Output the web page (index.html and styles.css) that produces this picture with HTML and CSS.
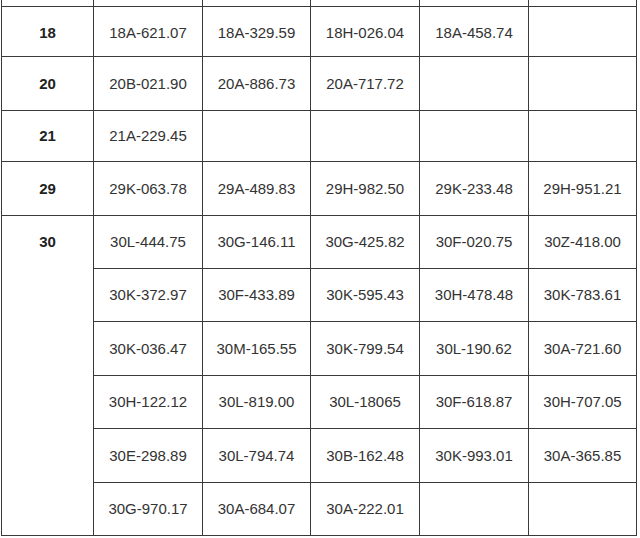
FILE: index.html
```
<!DOCTYPE html>
<html>
<head>
<meta charset="utf-8">
<link rel="stylesheet" href="styles.css">
</head>
<body>
<table class="plates">
  <tr class="h7">
    <td class="c1"></td><td class="c2"></td><td class="c3"></td><td class="c4"></td><td class="c5"></td><td class="c6"></td>
  </tr>
  <tr class="h50">
    <td class="code">18</td><td>18A-621.07</td><td>18A-329.59</td><td>18H-026.04</td><td>18A-458.74</td><td></td>
  </tr>
  <tr class="h54">
    <td class="code">20</td><td>20B-021.90</td><td>20A-886.73</td><td>20A-717.72</td><td></td><td></td>
  </tr>
  <tr class="h51">
    <td class="code">21</td><td>21A-229.45</td><td></td><td></td><td></td><td></td>
  </tr>
  <tr class="h54">
    <td class="code">29</td><td>29K-063.78</td><td>29A-489.83</td><td>29H-982.50</td><td>29K-233.48</td><td>29H-951.21</td>
  </tr>
  <tr class="h53">
    <td class="code top" rowspan="6">30</td><td>30L-444.75</td><td>30G-146.11</td><td>30G-425.82</td><td>30F-020.75</td><td>30Z-418.00</td>
  </tr>
  <tr class="h53">
    <td>30K-372.97</td><td>30F-433.89</td><td>30K-595.43</td><td>30H-478.48</td><td>30K-783.61</td>
  </tr>
  <tr class="h54">
    <td>30K-036.47</td><td>30M-165.55</td><td>30K-799.54</td><td>30L-190.62</td><td>30A-721.60</td>
  </tr>
  <tr class="h53">
    <td>30H-122.12</td><td>30L-819.00</td><td>30L-18065</td><td>30F-618.87</td><td>30H-707.05</td>
  </tr>
  <tr class="h54">
    <td>30E-298.89</td><td>30L-794.74</td><td>30B-162.48</td><td>30K-993.01</td><td>30A-365.85</td>
  </tr>
  <tr class="h53">
    <td>30G-970.17</td><td>30A-684.07</td><td>30A-222.01</td><td></td><td></td>
  </tr>
</table>
</body>
</html>
```

FILE: styles.css
```
html, body {
  margin: 0;
  padding: 0;
  background: #ffffff;
}
.plates {
  margin-left: 1px;
  border-collapse: separate;
  border-spacing: 0;
  table-layout: fixed;
  width: 636px;
  border-left: 1px solid #3a3a3a;
  font-family: "Liberation Sans", Arial, sans-serif;
  font-size: 15px;
  color: #333333;
}
.plates td {
  box-sizing: border-box;
  border-right: 1px solid #3a3a3a;
  border-bottom: 1px solid #3a3a3a;
  padding: 0;
  text-align: center;
  vertical-align: middle;
  line-height: 18px;
}
.c1 { width: 92px; }
.c2 { width: 109px; }
.c3 { width: 108px; }
.c4 { width: 109px; }
.c5 { width: 109px; }
.c6 { width: 108px; }
.h7 td { height: 7px; }
.h50 td { height: 50px; padding-top: 3px; }
.h51 td { height: 51px; }
.h53 td { height: 53px; }
.h54 td { height: 54px; }
.plates td.code {
  font-weight: bold;
  color: #222222;
}
.plates td.top {
  vertical-align: top;
  padding-top: 17px;
  height: auto;
}
```
